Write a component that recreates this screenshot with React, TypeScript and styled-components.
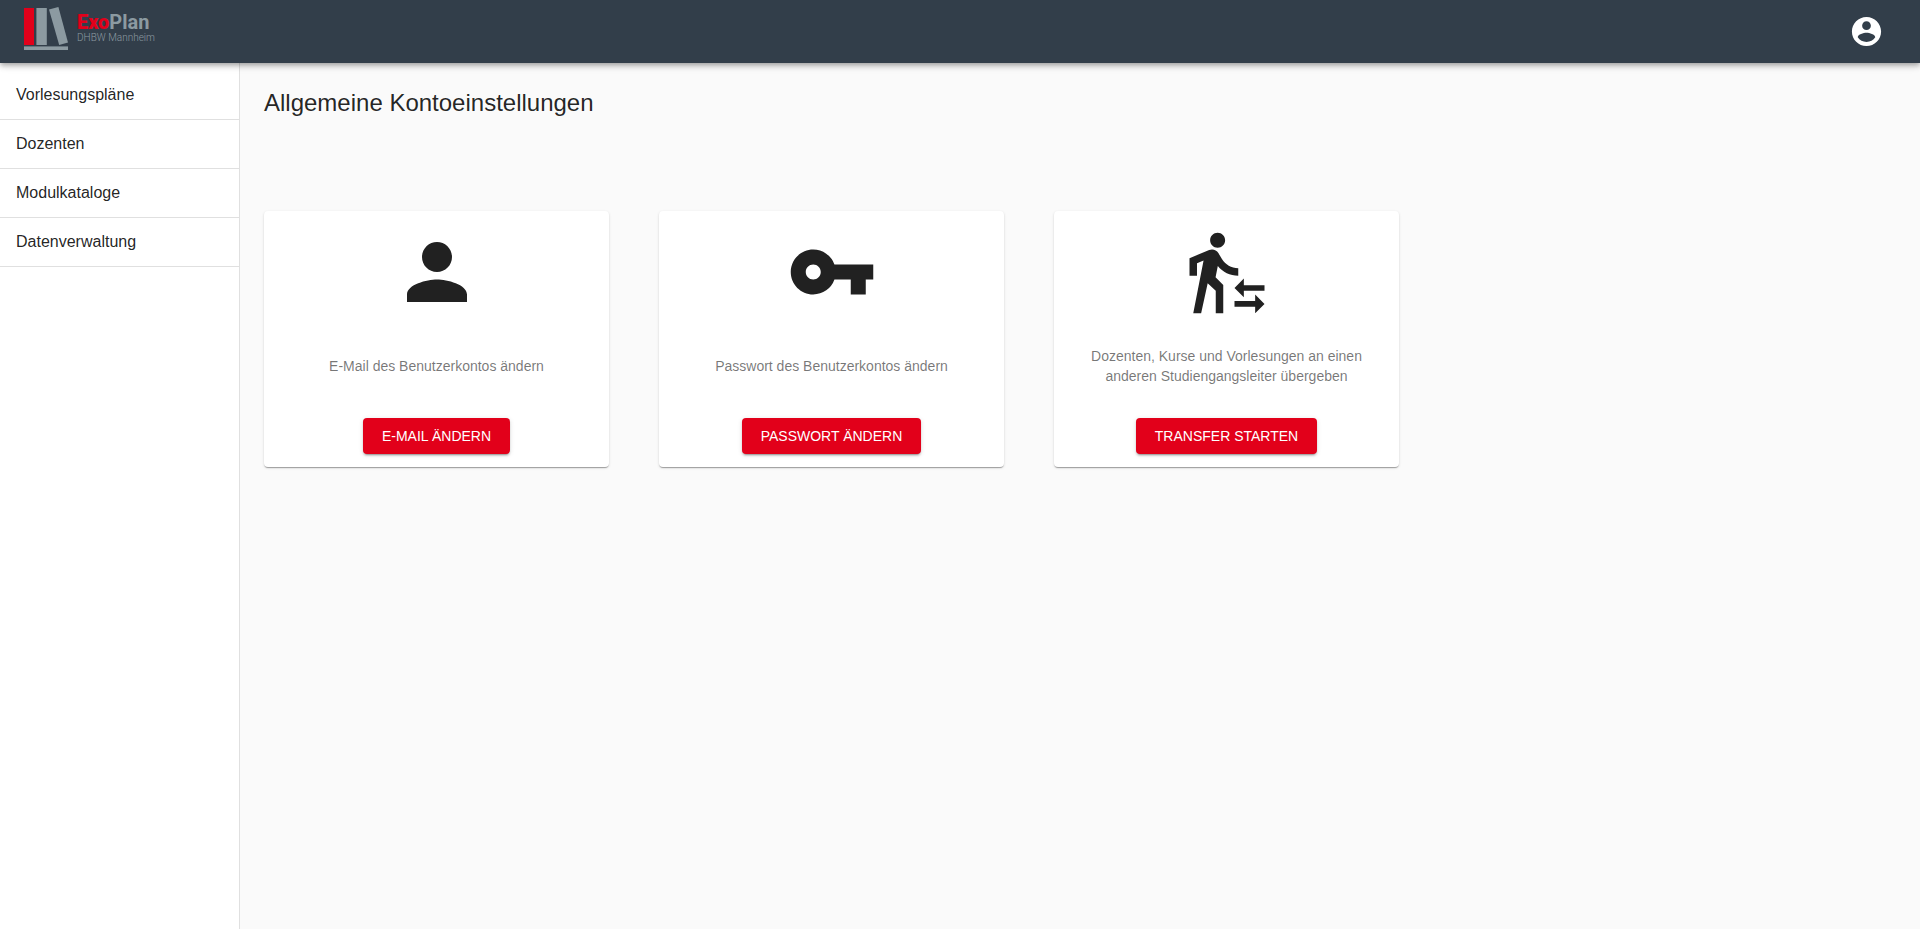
import React from "react";
import styled, { createGlobalStyle } from "styled-components";
import { MdPerson, MdVpnKey, MdTransferWithinAStation } from "react-icons/md";

const GlobalStyle = createGlobalStyle`
  *, *::before, *::after { box-sizing: border-box; }
  body {
    margin: 0;
    background: #fafafa;
    color: rgba(0, 0, 0, 0.87);
    font-family: "Liberation Sans", Arial, sans-serif;
    font-size: 16px;
    line-height: 24px;
  }
`;

const Page = styled.div`
  display: flex;
  flex-direction: column;
  min-height: 100vh;
`;

const TopBar = styled.header`
  position: relative;
  z-index: 1;
  display: flex;
  align-items: center;
  justify-content: space-between;
  height: 63px;
  padding: 0 24px;
  background: #323e4a;
  box-shadow:
    0 2px 4px -1px rgba(0, 0, 0, 0.2),
    0 4px 5px 0 rgba(0, 0, 0, 0.14),
    0 1px 10px 0 rgba(0, 0, 0, 0.12);
`;

const Brand = styled.a`
  display: flex;
  align-items: flex-start;
  gap: 9px;
  height: 51px;
  color: #8c9aa1;
  font-family: Roboto, sans-serif;
  text-decoration: none;
`;

const BrandText = styled.span`
  display: flex;
  flex-direction: column;
  padding-top: 5px;
`;

const BrandName = styled.span`
  font-size: 20px;
  font-weight: 700;
  line-height: 22px;
`;

const BrandAccent = styled.span`
  color: #e2001a;
  font-weight: 900;
`;

const BrandSub = styled.span`
  font-size: 10px;
  font-weight: 300;
  line-height: 10px;
`;

const IconButton = styled.button`
  display: flex;
  padding: 12px;
  border: 0;
  border-radius: 50%;
  background: transparent;
  color: #fff;
  cursor: pointer;
`;

const Body = styled.div`
  display: flex;
  flex: 1;
`;

const Sidebar = styled.nav`
  width: 240px;
  flex-shrink: 0;
  border-right: 1px solid #e0e0e0;
  background: #fff;
`;

const NavList = styled.ul`
  margin: 0;
  padding: 8px 0 0;
  list-style: none;
`;

const NavLink = styled.a`
  display: block;
  padding: 12px 16px;
  border-bottom: 1px solid #e0e0e0;
  color: inherit;
  text-decoration: none;
`;

const Main = styled.main`
  flex: 1;
  padding: 24px;
`;

const Title = styled.h1`
  margin: 0 0 92px;
  font-size: 24px;
  font-weight: 400;
  line-height: 32px;
`;

const Cards = styled.div`
  display: flex;
  flex-wrap: wrap;
  gap: 50px;
`;

const CardBox = styled.section`
  display: flex;
  flex-direction: column;
  align-items: center;
  width: 345px;
  padding: 16px 16px 13px;
  border-radius: 4px;
  background: #fff;
  color: #212121;
  box-shadow:
    0 2px 1px -1px rgba(0, 0, 0, 0.2),
    0 1px 1px 0 rgba(0, 0, 0, 0.14),
    0 1px 3px 0 rgba(0, 0, 0, 0.12);
`;

const CardText = styled.p`
  display: flex;
  align-items: center;
  height: 40px;
  margin: 29px 0 32px;
  color: rgba(0, 0, 0, 0.54);
  font-size: 14px;
  line-height: 20px;
  text-align: center;
`;

const ActionButton = styled.button`
  height: 36px;
  padding: 0 19px;
  border: 0;
  border-radius: 4px;
  background: #e2001a;
  color: #fff;
  font: 500 14px/24px "Liberation Sans", Arial, sans-serif;
  text-transform: uppercase;
  cursor: pointer;
  box-shadow:
    0 3px 1px -2px rgba(0, 0, 0, 0.2),
    0 2px 2px 0 rgba(0, 0, 0, 0.14),
    0 1px 5px 0 rgba(0, 0, 0, 0.12);
`;

const navItems = ["Vorlesungspläne", "Dozenten", "Modulkataloge", "Datenverwaltung"];

const cards = [
  { icon: MdPerson, text: "E-Mail des Benutzerkontos ändern", action: "E-Mail ändern" },
  { icon: MdVpnKey, text: "Passwort des Benutzerkontos ändern", action: "Passwort ändern" },
  {
    icon: MdTransferWithinAStation,
    text: "Dozenten, Kurse und Vorlesungen an einen anderen Studiengangsleiter übergeben",
    action: "Transfer starten",
  },
];

function BooksLogo() {
  return (
    <svg width="44" height="50" viewBox="0 0 44 50" aria-hidden="true">
      <rect x="0" y="2" width="10" height="37" fill="#e2001a" />
      <rect x="12.4" y="2" width="10.4" height="37" fill="#8c9aa1" />
      <path d="M25 3.4L34.4 1L44 36.4L35.2 39Z" fill="#8c9aa1" />
      <rect x="0" y="40.4" width="44" height="3.6" fill="#8c9aa1" />
    </svg>
  );
}

function AccountIcon() {
  return (
    <svg width="35" height="35" viewBox="0 0 24 24" fill="currentColor" aria-hidden="true">
      <path d="M12 2C6.48 2 2 6.48 2 12s4.48 10 10 10 10-4.48 10-10S17.52 2 12 2zm0 3c1.66 0 3 1.34 3 3s-1.34 3-3 3-3-1.34-3-3 1.34-3 3-3zm0 14.2c-2.5 0-4.71-1.28-6-3.22.03-1.99 4-3.08 6-3.08 1.99 0 5.97 1.09 6 3.08-1.29 1.94-3.5 3.22-6 3.22z" />
    </svg>
  );
}

export default function App() {
  return (
    <Page>
      <GlobalStyle />
      <TopBar>
        <Brand href="#">
          <BooksLogo />
          <BrandText>
            <BrandName>
              <BrandAccent>Exo</BrandAccent>Plan
            </BrandName>
            <BrandSub>DHBW Mannheim</BrandSub>
          </BrandText>
        </Brand>
        <IconButton type="button" aria-label="Konto">
          <AccountIcon />
        </IconButton>
      </TopBar>
      <Body>
        <Sidebar>
          <NavList>
            {navItems.map((item) => (
              <li key={item}>
                <NavLink href="#">{item}</NavLink>
              </li>
            ))}
          </NavList>
        </Sidebar>
        <Main>
          <Title>Allgemeine Kontoeinstellungen</Title>
          <Cards>
            {cards.map(({ icon: Icon, text, action }) => (
              <CardBox key={action}>
                <Icon size={90} aria-hidden="true" />
                <CardText>{text}</CardText>
                <ActionButton type="button">{action}</ActionButton>
              </CardBox>
            ))}
          </Cards>
        </Main>
      </Body>
    </Page>
  );
}
